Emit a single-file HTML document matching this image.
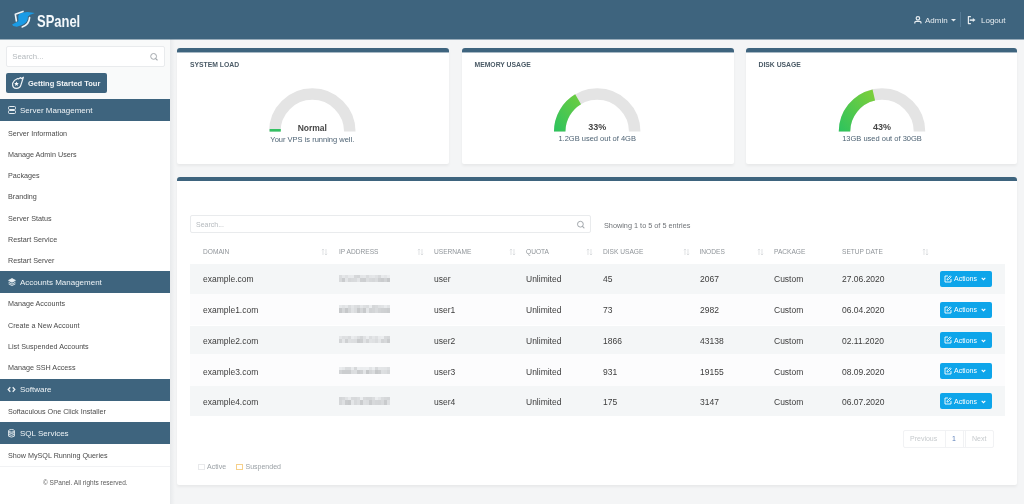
<!DOCTYPE html><html><head><meta charset="utf-8"><style>
*{margin:0;padding:0;box-sizing:border-box}
html,body{width:1024px;height:504px;overflow:hidden}
body{background:#f4f5f6;font-family:"Liberation Sans",sans-serif;position:relative;color:#3a3a3a}
.a{position:absolute;white-space:nowrap;line-height:1}
.sbox{background:#fff;border:1px solid #e9ebed;border-radius:2px}
.sec{left:0;width:170px;height:22px;background:#3e647e;color:#eef3f6;font-size:8px}
.sec span{position:absolute;left:20px;top:7.5px;line-height:1}
.itm{left:8px;font-size:7.2px;color:#4a4a4a}
.card{background:#fff;border-radius:3px 3px 2px 2px;border-top:5px solid #3e647e;box-shadow:0 1.5px 3px rgba(0,0,0,0.05)}
.ttl{font-size:6.8px;font-weight:bold;color:#4a5a66}
.th{font-size:6.6px;color:#8f9499;top:248.6px}
.srt{top:248px}
.td{font-size:8.5px;color:#3d3d3d}
.btn{left:940px;width:52px;height:16.2px;background:#0ea5ea;border-radius:2px}
.btn span{position:absolute;left:14px;top:4.5px;font-size:7px;color:#fff;line-height:1}
.ip{left:339px;font-size:8.5px;color:#a3a8ac;filter:blur(0.75px);letter-spacing:-0.2px}
</style></head><body>
<div class="a" style="left:0;top:0;width:1024px;height:504px;will-change:transform;background:#f4f5f6">
<div class="a" style="left:0;top:0;width:1024px;height:39px;background:#3e647e"></div>
<div class="a" style="left:0;top:39px;width:170px;height:465px;background:#fff"></div>
<div class="a" style="left:0;top:39px;width:170px;height:60px;background:#f9fafa"></div>
<div class="a" style="left:170px;top:39px;width:5px;height:465px;background:linear-gradient(90deg,#e8eaec,#f4f5f6)"></div>
<div class="a" style="left:0;top:39px;width:1024px;height:1px;background:#3e647e;opacity:.5"></div>
<svg class="a" style="left:0;top:0" width="40" height="32" viewBox="0 0 40 32">
<path d="M12.1 24.6 L18.4 21.2 L18.3 16 Q18.8 13.3 23.5 12.5 L27.6 12.1 L34.8 12.9 L30.2 14.8 L27.9 16.6 L27.7 19 Q26.6 23.2 21.4 25.3 L16.8 26.7 L13.2 26.1 Z" fill="#1a9be6"/>
<path d="M23 11.4 L15.3 14.2 L16.4 21" stroke="#eef4f8" stroke-width="1.6" fill="none" stroke-linecap="round" stroke-linejoin="round"/>
<path d="M29.6 17.6 Q29.3 24.5 22.2 26.9" stroke="#eef4f8" stroke-width="1.6" fill="none" stroke-linecap="round"/>
</svg>
<div class="a" style="left:37.2px;top:13px;font-size:16.4px;font-weight:bold;color:#f4f8fb;transform:scaleX(0.79);transform-origin:left top">SPanel</div>
<svg class="a" style="left:913px;top:15px" width="10" height="10" viewBox="0 0 10 10">
<circle cx="4.9" cy="3.35" r="1.75" stroke="#e6ecf0" stroke-width="1.2" fill="none"/>
<path d="M1.8 8.4 L1.8 7.6 Q1.8 6.4 3.2 6.4 L6.6 6.4 Q8 6.4 8 7.6 L8 8.4" stroke="#e6ecf0" stroke-width="1.2" fill="none"/>
</svg>
<div class="a" style="left:925px;top:17px;font-size:8px;color:#e6ecf0">Admin</div>
<svg class="a" style="left:951px;top:18.5px" width="5" height="3" viewBox="0 0 5 3"><path d="M0 0 L5 0 L2.5 2.5Z" fill="#e6ecf0"/></svg>
<div class="a" style="left:959.5px;top:12px;width:1px;height:15px;background:#557a95"></div>
<svg class="a" style="left:967px;top:16px" width="10" height="9" viewBox="0 0 10 9">
<path d="M3.9 0.6 L1.4 0.6 L1.4 7.6 L3.9 7.6" stroke="#e6ecf0" stroke-width="1.2" fill="none" stroke-linejoin="round"/>
<path d="M2.7 4.1 L6.2 4.1" stroke="#e6ecf0" stroke-width="1.5" fill="none"/>
<path d="M5.8 2.1 L8.5 4.1 L5.8 6 Z" fill="#e6ecf0"/>
</svg>
<div class="a" style="left:981px;top:17px;font-size:8px;color:#e6ecf0">Logout</div>
<div class="a sbox" style="left:5.5px;top:46px;width:159px;height:20.5px"></div>
<div class="a" style="left:12.3px;top:52.5px;font-size:7.8px;color:#b4b9bd">Search...</div>
<svg class="a" style="left:149px;top:52px" width="10" height="10" viewBox="0 0 10 10">
<circle cx="4.6" cy="4.4" r="2.9" stroke="#a3a8ad" stroke-width="1" fill="none"/><path d="M6.7 6.6 L8.2 8" stroke="#a3a8ad" stroke-width="1.1" stroke-linecap="round"/></svg>
<div class="a" style="left:5.5px;top:73px;width:101.8px;height:19.5px;background:#3e647e;border-radius:2px"></div>
<svg class="a" style="left:11px;top:76px" width="14" height="14" viewBox="0 0 14 14">
<path d="M1.6 7.2 Q1.2 12.4 5.4 12.4 Q9 12.3 9.9 9 L12.4 1.2 L10.3 2.7 L9.7 1.6 L7.3 3 L6.6 2.5 Q3 3.8 1.6 7.2 Z" stroke="#eef3f6" stroke-width="1.15" fill="none" stroke-linejoin="round"/>
<path d="M5.50 5.50 L6.15 7.11 L7.88 7.23 L6.55 8.34 L6.97 10.02 L5.50 9.10 L4.03 10.02 L4.45 8.34 L3.12 7.23 L4.85 7.11 Z" fill="#fff"/>
</svg>
<div class="a" style="left:28px;top:80px;font-size:7.5px;font-weight:bold;color:#f2f5f7">Getting Started Tour</div>
<div class="a sec" style="top:99px"><svg class="a" style="left:8px;top:7px" width="8" height="8" viewBox="0 0 8 8"><rect x="0.5" y="0.5" width="7" height="3" rx="1" stroke="#e8eef2" fill="none" stroke-width="1"/><rect x="0.5" y="4.5" width="7" height="3" rx="1" stroke="#e8eef2" fill="none" stroke-width="1"/></svg><span>Server Management</span></div>
<div class="a itm" style="top:130px">Server Information</div>
<div class="a itm" style="top:151px">Manage Admin Users</div>
<div class="a itm" style="top:172px">Packages</div>
<div class="a itm" style="top:193px">Branding</div>
<div class="a itm" style="top:215px">Server Status</div>
<div class="a itm" style="top:236px">Restart Service</div>
<div class="a itm" style="top:257px">Restart Server</div>
<div class="a sec" style="top:271px"><svg class="a" style="left:8px;top:7px" width="8" height="8" viewBox="0 0 8 8"><path d="M4 0.6 L7.4 2.4 L4 4.2 L0.6 2.4 Z" stroke="#e8eef2" fill="#e8eef2" stroke-width="0.9"/><path d="M0.6 4.3 L4 6.1 L7.4 4.3 M0.6 5.9 L4 7.5 L7.4 5.9" stroke="#e8eef2" fill="none" stroke-width="0.9"/></svg><span>Accounts Management</span></div>
<div class="a itm" style="top:300.4px">Manage Accounts</div>
<div class="a itm" style="top:321.7px">Create a New Account</div>
<div class="a itm" style="top:343.0px">List Suspended Accounts</div>
<div class="a itm" style="top:364.3px">Manage SSH Access</div>
<div class="a sec" style="top:378.6px"><svg class="a" style="left:7px;top:7.5px" width="9" height="7" viewBox="0 0 9 7"><path d="M3.3 1.2 L1.2 3.5 L3.3 5.8 M5.7 1.2 L7.8 3.5 L5.7 5.8" stroke="#e8eef2" fill="none" stroke-width="1.3"/></svg><span>Software</span></div>
<div class="a itm" style="top:408.2px">Softaculous One Click Installer</div>
<div class="a sec" style="top:422px"><svg class="a" style="left:8px;top:6.5px" width="7" height="9" viewBox="0 0 7 9"><ellipse cx="3.5" cy="1.8" rx="2.9" ry="1.3" stroke="#e8eef2" fill="none" stroke-width="0.9"/><path d="M0.6 1.8 L0.6 7.2 Q3.5 9 6.4 7.2 L6.4 1.8 M0.6 3.6 Q3.5 5.4 6.4 3.6 M0.6 5.4 Q3.5 7.2 6.4 5.4" stroke="#e8eef2" fill="none" stroke-width="0.9"/></svg><span>SQL Services</span></div>
<div class="a itm" style="top:452.2px">Show MySQL Running Queries</div>
<div class="a" style="left:0;top:466px;width:170px;height:1px;background:#f1f2f4"></div>
<div class="a" style="left:43px;top:480px;font-size:6.5px;color:#5a5a5a">© SPanel. All rights reserved.</div>
<div class="a card" style="left:177px;top:48px;width:272px;height:116px;border-top-width:4px"></div>
<div class="a" style="left:177px;top:52px;width:272px;height:1px;background:rgba(62,100,126,0.45)"></div>
<div class="a ttl" style="left:190px;top:61.8px">SYSTEM LOAD</div>
<div class="a card" style="left:461.5px;top:48px;width:272px;height:116px;border-top-width:4px"></div>
<div class="a" style="left:461.5px;top:52px;width:272px;height:1px;background:rgba(62,100,126,0.45)"></div>
<div class="a ttl" style="left:474.5px;top:61.8px">MEMORY USAGE</div>
<div class="a card" style="left:745.5px;top:48px;width:271.5px;height:116px;border-top-width:4px"></div>
<div class="a" style="left:745.5px;top:52px;width:271.5px;height:1px;background:rgba(62,100,126,0.45)"></div>
<div class="a ttl" style="left:758.5px;top:61.8px">DISK USAGE</div>
<svg class="a" style="left:0;top:0" width="1024" height="504" viewBox="0 0 1024 504"><defs><linearGradient id="g312" gradientUnits="userSpaceOnUse" x1="269.3" y1="131.6" x2="320.3" y2="88.6"><stop offset="0" stop-color="#2cc35e"/><stop offset="1" stop-color="#93d230"/></linearGradient></defs><path d="M 274.80 131.60 A 37.50 37.50 0 0 1 349.80 131.60" stroke="#e4e4e4" stroke-width="11.5" fill="none"/></svg>
<div class="a" style="left:212.3px;top:124px;width:200px;text-align:center;font-size:8.5px;font-weight:bold;color:#474747">Normal</div>
<div class="a" style="left:212.3px;top:136px;width:200px;text-align:center;font-size:7.5px;color:#4e6374">Your VPS is running well.</div>
<svg class="a" style="left:0;top:0" width="1024" height="504"><path d="M 269.6 130.3 L 280.8 130.3" stroke="#34c063" stroke-width="2.6"/></svg>
<svg class="a" style="left:0;top:0" width="1024" height="504" viewBox="0 0 1024 504"><defs><linearGradient id="g597" gradientUnits="userSpaceOnUse" x1="554.2" y1="131.6" x2="605.2" y2="88.6"><stop offset="0" stop-color="#2cc35e"/><stop offset="1" stop-color="#93d230"/></linearGradient></defs><path d="M 559.70 131.60 A 37.50 37.50 0 0 1 634.70 131.60" stroke="#e4e4e4" stroke-width="11.5" fill="none"/><path d="M 559.70 131.60 A 37.50 37.50 0 0 1 578.11 99.32" stroke="url(#g597)" stroke-width="11.5" fill="none"/></svg>
<div class="a" style="left:497.20000000000005px;top:122.8px;width:200px;text-align:center;font-size:9px;font-weight:bold;color:#474747">33%</div>
<div class="a" style="left:497.20000000000005px;top:135px;width:200px;text-align:center;font-size:7.5px;color:#4e6374">1.2GB used out of 4GB</div>
<svg class="a" style="left:0;top:0" width="1024" height="504" viewBox="0 0 1024 504"><defs><linearGradient id="g882" gradientUnits="userSpaceOnUse" x1="839.0" y1="131.6" x2="890.0" y2="88.6"><stop offset="0" stop-color="#2cc35e"/><stop offset="1" stop-color="#93d230"/></linearGradient></defs><path d="M 844.50 131.60 A 37.50 37.50 0 0 1 919.50 131.60" stroke="#e4e4e4" stroke-width="11.5" fill="none"/><path d="M 844.50 131.60 A 37.50 37.50 0 0 1 873.82 95.00" stroke="url(#g882)" stroke-width="11.5" fill="none"/></svg>
<div class="a" style="left:782px;top:122.8px;width:200px;text-align:center;font-size:9px;font-weight:bold;color:#474747">43%</div>
<div class="a" style="left:782px;top:135px;width:200px;text-align:center;font-size:7.5px;color:#4e6374">13GB used out of 30GB</div>
<div class="a card" style="left:177px;top:177px;width:840px;height:307.5px;border-top-width:4px"></div>
<div class="a sbox" style="left:190px;top:214.5px;width:401px;height:18.5px"></div>
<div class="a" style="left:196px;top:220.5px;font-size:7px;color:#b4b9bd">Search...</div>
<svg class="a" style="left:575.5px;top:220px" width="9" height="9" viewBox="0 0 9 9">
<circle cx="4.4" cy="4.2" r="2.9" stroke="#a3a8ad" stroke-width="1" fill="none"/><path d="M6.5 6.4 L8 7.8" stroke="#a3a8ad" stroke-width="1.1" stroke-linecap="round"/></svg>
<div class="a" style="left:604px;top:222px;font-size:7.3px;color:#6f7377">Showing 1 to 5 of 5 entries</div>
<div class="a th" style="left:203px">DOMAIN</div>
<svg class="a srt" style="left:321.4px" width="7" height="8" viewBox="0 0 7 8"><path d="M2 7 L2 1 M0.8 2.2 L2 1 L3.2 2.2 M5 1 L5 7 M3.8 5.8 L5 7 L6.2 5.8" stroke="#d3d6d9" stroke-width="0.7" fill="none"/></svg>
<div class="a th" style="left:339px">IP ADDRESS</div>
<svg class="a srt" style="left:416.8px" width="7" height="8" viewBox="0 0 7 8"><path d="M2 7 L2 1 M0.8 2.2 L2 1 L3.2 2.2 M5 1 L5 7 M3.8 5.8 L5 7 L6.2 5.8" stroke="#d3d6d9" stroke-width="0.7" fill="none"/></svg>
<div class="a th" style="left:434px">USERNAME</div>
<svg class="a srt" style="left:509.0px" width="7" height="8" viewBox="0 0 7 8"><path d="M2 7 L2 1 M0.8 2.2 L2 1 L3.2 2.2 M5 1 L5 7 M3.8 5.8 L5 7 L6.2 5.8" stroke="#d3d6d9" stroke-width="0.7" fill="none"/></svg>
<div class="a th" style="left:526px">QUOTA</div>
<svg class="a srt" style="left:586.0px" width="7" height="8" viewBox="0 0 7 8"><path d="M2 7 L2 1 M0.8 2.2 L2 1 L3.2 2.2 M5 1 L5 7 M3.8 5.8 L5 7 L6.2 5.8" stroke="#d3d6d9" stroke-width="0.7" fill="none"/></svg>
<div class="a th" style="left:603px">DISK USAGE</div>
<svg class="a srt" style="left:682.6px" width="7" height="8" viewBox="0 0 7 8"><path d="M2 7 L2 1 M0.8 2.2 L2 1 L3.2 2.2 M5 1 L5 7 M3.8 5.8 L5 7 L6.2 5.8" stroke="#d3d6d9" stroke-width="0.7" fill="none"/></svg>
<div class="a th" style="left:699.5px">INODES</div>
<svg class="a srt" style="left:757.0px" width="7" height="8" viewBox="0 0 7 8"><path d="M2 7 L2 1 M0.8 2.2 L2 1 L3.2 2.2 M5 1 L5 7 M3.8 5.8 L5 7 L6.2 5.8" stroke="#d3d6d9" stroke-width="0.7" fill="none"/></svg>
<div class="a th" style="left:774px">PACKAGE</div>
<div class="a th" style="left:842px">SETUP DATE</div>
<svg class="a srt" style="left:922.3px" width="7" height="8" viewBox="0 0 7 8"><path d="M2 7 L2 1 M0.8 2.2 L2 1 L3.2 2.2 M5 1 L5 7 M3.8 5.8 L5 7 L6.2 5.8" stroke="#d3d6d9" stroke-width="0.7" fill="none"/></svg>
<div class="a" style="left:190px;top:264.00px;width:815px;height:30.30px;background:#f4f6f7"></div>
<div class="a td" style="left:203px;top:275.00px">example.com</div>
<div class="a td" style="left:434px;top:275.00px">user</div>
<div class="a td" style="left:526px;top:275.00px">Unlimited</div>
<div class="a td" style="left:603px;top:275.00px">45</div>
<div class="a td" style="left:700px;top:275.00px">2067</div>
<div class="a td" style="left:774px;top:275.00px">Custom</div>
<div class="a td" style="left:842px;top:275.00px">27.06.2020</div>
<div class="a" style="left:339px;top:274.70px;width:49px;height:7.5px;filter:blur(0.6px)"><div class="a" style="left:0px;top:0px;width:3px;height:3px;background:rgb(219,221,223)"></div><div class="a" style="left:0px;top:3px;width:3px;height:4.5px;background:rgb(216,218,220)"></div><div class="a" style="left:3px;top:0px;width:3px;height:3px;background:rgb(229,231,233)"></div><div class="a" style="left:3px;top:3px;width:3px;height:4.5px;background:rgb(202,204,206)"></div><div class="a" style="left:6px;top:0px;width:3px;height:3px;background:rgb(223,225,227)"></div><div class="a" style="left:6px;top:3px;width:3px;height:4.5px;background:rgb(227,229,231)"></div><div class="a" style="left:9px;top:0px;width:3px;height:3px;background:rgb(231,233,235)"></div><div class="a" style="left:9px;top:3px;width:3px;height:4.5px;background:rgb(213,215,217)"></div><div class="a" style="left:12px;top:0px;width:3px;height:3px;background:rgb(232,234,236)"></div><div class="a" style="left:12px;top:3px;width:3px;height:4.5px;background:rgb(216,218,220)"></div><div class="a" style="left:15px;top:0px;width:3px;height:3px;background:rgb(214,216,218)"></div><div class="a" style="left:15px;top:3px;width:3px;height:4.5px;background:rgb(217,219,221)"></div><div class="a" style="left:18px;top:0px;width:3px;height:3px;background:rgb(212,214,216)"></div><div class="a" style="left:18px;top:3px;width:3px;height:4.5px;background:rgb(227,229,231)"></div><div class="a" style="left:21px;top:0px;width:3px;height:3px;background:rgb(227,229,231)"></div><div class="a" style="left:21px;top:3px;width:3px;height:4.5px;background:rgb(206,208,210)"></div><div class="a" style="left:24px;top:0px;width:3px;height:3px;background:rgb(229,231,233)"></div><div class="a" style="left:24px;top:3px;width:3px;height:4.5px;background:rgb(205,207,209)"></div><div class="a" style="left:27px;top:0px;width:3px;height:3px;background:rgb(218,220,222)"></div><div class="a" style="left:27px;top:3px;width:3px;height:4.5px;background:rgb(220,222,224)"></div><div class="a" style="left:30px;top:0px;width:3px;height:3px;background:rgb(227,229,231)"></div><div class="a" style="left:30px;top:3px;width:3px;height:4.5px;background:rgb(215,217,219)"></div><div class="a" style="left:33px;top:0px;width:3px;height:3px;background:rgb(229,231,233)"></div><div class="a" style="left:33px;top:3px;width:3px;height:4.5px;background:rgb(213,215,217)"></div><div class="a" style="left:36px;top:0px;width:3px;height:3px;background:rgb(224,226,228)"></div><div class="a" style="left:36px;top:3px;width:3px;height:4.5px;background:rgb(218,220,222)"></div><div class="a" style="left:39px;top:0px;width:3px;height:3px;background:rgb(216,218,220)"></div><div class="a" style="left:39px;top:3px;width:3px;height:4.5px;background:rgb(205,207,209)"></div><div class="a" style="left:42px;top:0px;width:3px;height:3px;background:rgb(232,234,236)"></div><div class="a" style="left:42px;top:3px;width:3px;height:4.5px;background:rgb(202,204,206)"></div><div class="a" style="left:45px;top:0px;width:3px;height:3px;background:rgb(228,230,232)"></div><div class="a" style="left:45px;top:3px;width:3px;height:4.5px;background:rgb(210,212,214)"></div><div class="a" style="left:48px;top:0px;width:3px;height:3px;background:rgb(235,237,239)"></div><div class="a" style="left:48px;top:3px;width:3px;height:4.5px;background:rgb(198,200,202)"></div></div>
<div class="a btn" style="top:270.90px"><svg class="a" style="left:4px;top:4px" width="8" height="8" viewBox="0 0 8 8"><path d="M4 1 L1 1 L1 7 L7 7 L7 4" stroke="#fff" stroke-width="0.9" fill="none"/><path d="M3 5 L3.2 3.8 L6.2 0.8 L7.2 1.8 L4.2 4.8 Z" stroke="#fff" stroke-width="0.8" fill="none"/></svg><span>Actions</span><svg class="a" style="left:41px;top:6.5px" width="5" height="4" viewBox="0 0 5 4"><path d="M0.7 0.8 L2.5 2.6 L4.3 0.8" stroke="#fff" stroke-width="1.1" fill="none"/></svg></div>
<div class="a" style="left:190px;top:294.30px;width:815px;height:31.20px;background:#fcfcfd"></div>
<div class="a td" style="left:203px;top:306.00px">example1.com</div>
<div class="a td" style="left:434px;top:306.00px">user1</div>
<div class="a td" style="left:526px;top:306.00px">Unlimited</div>
<div class="a td" style="left:603px;top:306.00px">73</div>
<div class="a td" style="left:700px;top:306.00px">2982</div>
<div class="a td" style="left:774px;top:306.00px">Custom</div>
<div class="a td" style="left:842px;top:306.00px">06.04.2020</div>
<div class="a" style="left:339px;top:305.30px;width:49px;height:7.5px;filter:blur(0.6px)"><div class="a" style="left:0px;top:0px;width:3px;height:3px;background:rgb(230,232,234)"></div><div class="a" style="left:0px;top:3px;width:3px;height:4.5px;background:rgb(199,201,203)"></div><div class="a" style="left:3px;top:0px;width:3px;height:3px;background:rgb(225,227,229)"></div><div class="a" style="left:3px;top:3px;width:3px;height:4.5px;background:rgb(213,215,217)"></div><div class="a" style="left:6px;top:0px;width:3px;height:3px;background:rgb(230,232,234)"></div><div class="a" style="left:6px;top:3px;width:3px;height:4.5px;background:rgb(198,200,202)"></div><div class="a" style="left:9px;top:0px;width:3px;height:3px;background:rgb(218,220,222)"></div><div class="a" style="left:9px;top:3px;width:3px;height:4.5px;background:rgb(212,214,216)"></div><div class="a" style="left:12px;top:0px;width:3px;height:3px;background:rgb(227,229,231)"></div><div class="a" style="left:12px;top:3px;width:3px;height:4.5px;background:rgb(224,226,228)"></div><div class="a" style="left:15px;top:0px;width:3px;height:3px;background:rgb(220,222,224)"></div><div class="a" style="left:15px;top:3px;width:3px;height:4.5px;background:rgb(218,220,222)"></div><div class="a" style="left:18px;top:0px;width:3px;height:3px;background:rgb(217,219,221)"></div><div class="a" style="left:18px;top:3px;width:3px;height:4.5px;background:rgb(199,201,203)"></div><div class="a" style="left:21px;top:0px;width:3px;height:3px;background:rgb(228,230,232)"></div><div class="a" style="left:21px;top:3px;width:3px;height:4.5px;background:rgb(213,215,217)"></div><div class="a" style="left:24px;top:0px;width:3px;height:3px;background:rgb(222,224,226)"></div><div class="a" style="left:24px;top:3px;width:3px;height:4.5px;background:rgb(200,202,204)"></div><div class="a" style="left:27px;top:0px;width:3px;height:3px;background:rgb(219,221,223)"></div><div class="a" style="left:27px;top:3px;width:3px;height:4.5px;background:rgb(228,230,232)"></div><div class="a" style="left:30px;top:0px;width:3px;height:3px;background:rgb(235,237,239)"></div><div class="a" style="left:30px;top:3px;width:3px;height:4.5px;background:rgb(209,211,213)"></div><div class="a" style="left:33px;top:0px;width:3px;height:3px;background:rgb(213,215,217)"></div><div class="a" style="left:33px;top:3px;width:3px;height:4.5px;background:rgb(211,213,215)"></div><div class="a" style="left:36px;top:0px;width:3px;height:3px;background:rgb(216,218,220)"></div><div class="a" style="left:36px;top:3px;width:3px;height:4.5px;background:rgb(217,219,221)"></div><div class="a" style="left:39px;top:0px;width:3px;height:3px;background:rgb(223,225,227)"></div><div class="a" style="left:39px;top:3px;width:3px;height:4.5px;background:rgb(210,212,214)"></div><div class="a" style="left:42px;top:0px;width:3px;height:3px;background:rgb(225,227,229)"></div><div class="a" style="left:42px;top:3px;width:3px;height:4.5px;background:rgb(207,209,211)"></div><div class="a" style="left:45px;top:0px;width:3px;height:3px;background:rgb(233,235,237)"></div><div class="a" style="left:45px;top:3px;width:3px;height:4.5px;background:rgb(206,208,210)"></div><div class="a" style="left:48px;top:0px;width:3px;height:3px;background:rgb(226,228,230)"></div><div class="a" style="left:48px;top:3px;width:3px;height:4.5px;background:rgb(203,205,207)"></div></div>
<div class="a btn" style="top:301.50px"><svg class="a" style="left:4px;top:4px" width="8" height="8" viewBox="0 0 8 8"><path d="M4 1 L1 1 L1 7 L7 7 L7 4" stroke="#fff" stroke-width="0.9" fill="none"/><path d="M3 5 L3.2 3.8 L6.2 0.8 L7.2 1.8 L4.2 4.8 Z" stroke="#fff" stroke-width="0.8" fill="none"/></svg><span>Actions</span><svg class="a" style="left:41px;top:6.5px" width="5" height="4" viewBox="0 0 5 4"><path d="M0.7 0.8 L2.5 2.6 L4.3 0.8" stroke="#fff" stroke-width="1.1" fill="none"/></svg></div>
<div class="a" style="left:190px;top:325.50px;width:815px;height:28.50px;background:#f4f6f7"></div>
<div class="a td" style="left:203px;top:337.00px">example2.com</div>
<div class="a td" style="left:434px;top:337.00px">user2</div>
<div class="a td" style="left:526px;top:337.00px">Unlimited</div>
<div class="a td" style="left:603px;top:337.00px">1866</div>
<div class="a td" style="left:700px;top:337.00px">43138</div>
<div class="a td" style="left:774px;top:337.00px">Custom</div>
<div class="a td" style="left:842px;top:337.00px">02.11.2020</div>
<div class="a" style="left:339px;top:335.90px;width:49px;height:7.5px;filter:blur(0.6px)"><div class="a" style="left:0px;top:0px;width:3px;height:3px;background:rgb(228,230,232)"></div><div class="a" style="left:0px;top:3px;width:3px;height:4.5px;background:rgb(211,213,215)"></div><div class="a" style="left:3px;top:0px;width:3px;height:3px;background:rgb(221,223,225)"></div><div class="a" style="left:3px;top:3px;width:3px;height:4.5px;background:rgb(228,230,232)"></div><div class="a" style="left:6px;top:0px;width:3px;height:3px;background:rgb(223,225,227)"></div><div class="a" style="left:6px;top:3px;width:3px;height:4.5px;background:rgb(207,209,211)"></div><div class="a" style="left:9px;top:0px;width:3px;height:3px;background:rgb(217,219,221)"></div><div class="a" style="left:9px;top:3px;width:3px;height:4.5px;background:rgb(222,224,226)"></div><div class="a" style="left:12px;top:0px;width:3px;height:3px;background:rgb(234,236,238)"></div><div class="a" style="left:12px;top:3px;width:3px;height:4.5px;background:rgb(220,222,224)"></div><div class="a" style="left:15px;top:0px;width:3px;height:3px;background:rgb(229,231,233)"></div><div class="a" style="left:15px;top:3px;width:3px;height:4.5px;background:rgb(219,221,223)"></div><div class="a" style="left:18px;top:0px;width:3px;height:3px;background:rgb(220,222,224)"></div><div class="a" style="left:18px;top:3px;width:3px;height:4.5px;background:rgb(201,203,205)"></div><div class="a" style="left:21px;top:0px;width:3px;height:3px;background:rgb(212,214,216)"></div><div class="a" style="left:21px;top:3px;width:3px;height:4.5px;background:rgb(205,207,209)"></div><div class="a" style="left:24px;top:0px;width:3px;height:3px;background:rgb(224,226,228)"></div><div class="a" style="left:24px;top:3px;width:3px;height:4.5px;background:rgb(224,226,228)"></div><div class="a" style="left:27px;top:0px;width:3px;height:3px;background:rgb(235,237,239)"></div><div class="a" style="left:27px;top:3px;width:3px;height:4.5px;background:rgb(211,213,215)"></div><div class="a" style="left:30px;top:0px;width:3px;height:3px;background:rgb(220,222,224)"></div><div class="a" style="left:30px;top:3px;width:3px;height:4.5px;background:rgb(225,227,229)"></div><div class="a" style="left:33px;top:0px;width:3px;height:3px;background:rgb(228,230,232)"></div><div class="a" style="left:33px;top:3px;width:3px;height:4.5px;background:rgb(223,225,227)"></div><div class="a" style="left:36px;top:0px;width:3px;height:3px;background:rgb(222,224,226)"></div><div class="a" style="left:36px;top:3px;width:3px;height:4.5px;background:rgb(218,220,222)"></div><div class="a" style="left:39px;top:0px;width:3px;height:3px;background:rgb(233,235,237)"></div><div class="a" style="left:39px;top:3px;width:3px;height:4.5px;background:rgb(228,230,232)"></div><div class="a" style="left:42px;top:0px;width:3px;height:3px;background:rgb(235,237,239)"></div><div class="a" style="left:42px;top:3px;width:3px;height:4.5px;background:rgb(210,212,214)"></div><div class="a" style="left:45px;top:0px;width:3px;height:3px;background:rgb(216,218,220)"></div><div class="a" style="left:45px;top:3px;width:3px;height:4.5px;background:rgb(215,217,219)"></div><div class="a" style="left:48px;top:0px;width:3px;height:3px;background:rgb(213,215,217)"></div><div class="a" style="left:48px;top:3px;width:3px;height:4.5px;background:rgb(202,204,206)"></div></div>
<div class="a btn" style="top:332.10px"><svg class="a" style="left:4px;top:4px" width="8" height="8" viewBox="0 0 8 8"><path d="M4 1 L1 1 L1 7 L7 7 L7 4" stroke="#fff" stroke-width="0.9" fill="none"/><path d="M3 5 L3.2 3.8 L6.2 0.8 L7.2 1.8 L4.2 4.8 Z" stroke="#fff" stroke-width="0.8" fill="none"/></svg><span>Actions</span><svg class="a" style="left:41px;top:6.5px" width="5" height="4" viewBox="0 0 5 4"><path d="M0.7 0.8 L2.5 2.6 L4.3 0.8" stroke="#fff" stroke-width="1.1" fill="none"/></svg></div>
<div class="a" style="left:190px;top:354.00px;width:815px;height:32.30px;background:#fcfcfd"></div>
<div class="a td" style="left:203px;top:368.00px">example3.com</div>
<div class="a td" style="left:434px;top:368.00px">user3</div>
<div class="a td" style="left:526px;top:368.00px">Unlimited</div>
<div class="a td" style="left:603px;top:368.00px">931</div>
<div class="a td" style="left:700px;top:368.00px">19155</div>
<div class="a td" style="left:774px;top:368.00px">Custom</div>
<div class="a td" style="left:842px;top:368.00px">08.09.2020</div>
<div class="a" style="left:339px;top:366.50px;width:49px;height:7.5px;filter:blur(0.6px)"><div class="a" style="left:0px;top:0px;width:3px;height:3px;background:rgb(234,236,238)"></div><div class="a" style="left:0px;top:3px;width:3px;height:4.5px;background:rgb(210,212,214)"></div><div class="a" style="left:3px;top:0px;width:3px;height:3px;background:rgb(230,232,234)"></div><div class="a" style="left:3px;top:3px;width:3px;height:4.5px;background:rgb(203,205,207)"></div><div class="a" style="left:6px;top:0px;width:3px;height:3px;background:rgb(218,220,222)"></div><div class="a" style="left:6px;top:3px;width:3px;height:4.5px;background:rgb(203,205,207)"></div><div class="a" style="left:9px;top:0px;width:3px;height:3px;background:rgb(218,220,222)"></div><div class="a" style="left:9px;top:3px;width:3px;height:4.5px;background:rgb(203,205,207)"></div><div class="a" style="left:12px;top:0px;width:3px;height:3px;background:rgb(233,235,237)"></div><div class="a" style="left:12px;top:3px;width:3px;height:4.5px;background:rgb(219,221,223)"></div><div class="a" style="left:15px;top:0px;width:3px;height:3px;background:rgb(214,216,218)"></div><div class="a" style="left:15px;top:3px;width:3px;height:4.5px;background:rgb(220,222,224)"></div><div class="a" style="left:18px;top:0px;width:3px;height:3px;background:rgb(236,238,240)"></div><div class="a" style="left:18px;top:3px;width:3px;height:4.5px;background:rgb(202,204,206)"></div><div class="a" style="left:21px;top:0px;width:3px;height:3px;background:rgb(234,236,238)"></div><div class="a" style="left:21px;top:3px;width:3px;height:4.5px;background:rgb(207,209,211)"></div><div class="a" style="left:24px;top:0px;width:3px;height:3px;background:rgb(235,237,239)"></div><div class="a" style="left:24px;top:3px;width:3px;height:4.5px;background:rgb(227,229,231)"></div><div class="a" style="left:27px;top:0px;width:3px;height:3px;background:rgb(236,238,240)"></div><div class="a" style="left:27px;top:3px;width:3px;height:4.5px;background:rgb(198,200,202)"></div><div class="a" style="left:30px;top:0px;width:3px;height:3px;background:rgb(226,228,230)"></div><div class="a" style="left:30px;top:3px;width:3px;height:4.5px;background:rgb(212,214,216)"></div><div class="a" style="left:33px;top:0px;width:3px;height:3px;background:rgb(235,237,239)"></div><div class="a" style="left:33px;top:3px;width:3px;height:4.5px;background:rgb(218,220,222)"></div><div class="a" style="left:36px;top:0px;width:3px;height:3px;background:rgb(215,217,219)"></div><div class="a" style="left:36px;top:3px;width:3px;height:4.5px;background:rgb(198,200,202)"></div><div class="a" style="left:39px;top:0px;width:3px;height:3px;background:rgb(228,230,232)"></div><div class="a" style="left:39px;top:3px;width:3px;height:4.5px;background:rgb(203,205,207)"></div><div class="a" style="left:42px;top:0px;width:3px;height:3px;background:rgb(227,229,231)"></div><div class="a" style="left:42px;top:3px;width:3px;height:4.5px;background:rgb(221,223,225)"></div><div class="a" style="left:45px;top:0px;width:3px;height:3px;background:rgb(226,228,230)"></div><div class="a" style="left:45px;top:3px;width:3px;height:4.5px;background:rgb(219,221,223)"></div><div class="a" style="left:48px;top:0px;width:3px;height:3px;background:rgb(221,223,225)"></div><div class="a" style="left:48px;top:3px;width:3px;height:4.5px;background:rgb(213,215,217)"></div></div>
<div class="a btn" style="top:362.70px"><svg class="a" style="left:4px;top:4px" width="8" height="8" viewBox="0 0 8 8"><path d="M4 1 L1 1 L1 7 L7 7 L7 4" stroke="#fff" stroke-width="0.9" fill="none"/><path d="M3 5 L3.2 3.8 L6.2 0.8 L7.2 1.8 L4.2 4.8 Z" stroke="#fff" stroke-width="0.8" fill="none"/></svg><span>Actions</span><svg class="a" style="left:41px;top:6.5px" width="5" height="4" viewBox="0 0 5 4"><path d="M0.7 0.8 L2.5 2.6 L4.3 0.8" stroke="#fff" stroke-width="1.1" fill="none"/></svg></div>
<div class="a" style="left:190px;top:386.30px;width:815px;height:29.70px;background:#f4f6f7"></div>
<div class="a td" style="left:203px;top:398.00px">example4.com</div>
<div class="a td" style="left:434px;top:398.00px">user4</div>
<div class="a td" style="left:526px;top:398.00px">Unlimited</div>
<div class="a td" style="left:603px;top:398.00px">175</div>
<div class="a td" style="left:700px;top:398.00px">3147</div>
<div class="a td" style="left:774px;top:398.00px">Custom</div>
<div class="a td" style="left:842px;top:398.00px">06.07.2020</div>
<div class="a" style="left:339px;top:397.10px;width:49px;height:7.5px;filter:blur(0.6px)"><div class="a" style="left:0px;top:0px;width:3px;height:3px;background:rgb(212,214,216)"></div><div class="a" style="left:0px;top:3px;width:3px;height:4.5px;background:rgb(213,215,217)"></div><div class="a" style="left:3px;top:0px;width:3px;height:3px;background:rgb(215,217,219)"></div><div class="a" style="left:3px;top:3px;width:3px;height:4.5px;background:rgb(222,224,226)"></div><div class="a" style="left:6px;top:0px;width:3px;height:3px;background:rgb(224,226,228)"></div><div class="a" style="left:6px;top:3px;width:3px;height:4.5px;background:rgb(202,204,206)"></div><div class="a" style="left:9px;top:0px;width:3px;height:3px;background:rgb(233,235,237)"></div><div class="a" style="left:9px;top:3px;width:3px;height:4.5px;background:rgb(199,201,203)"></div><div class="a" style="left:12px;top:0px;width:3px;height:3px;background:rgb(216,218,220)"></div><div class="a" style="left:12px;top:3px;width:3px;height:4.5px;background:rgb(228,230,232)"></div><div class="a" style="left:15px;top:0px;width:3px;height:3px;background:rgb(215,217,219)"></div><div class="a" style="left:15px;top:3px;width:3px;height:4.5px;background:rgb(215,217,219)"></div><div class="a" style="left:18px;top:0px;width:3px;height:3px;background:rgb(219,221,223)"></div><div class="a" style="left:18px;top:3px;width:3px;height:4.5px;background:rgb(220,222,224)"></div><div class="a" style="left:21px;top:0px;width:3px;height:3px;background:rgb(236,238,240)"></div><div class="a" style="left:21px;top:3px;width:3px;height:4.5px;background:rgb(202,204,206)"></div><div class="a" style="left:24px;top:0px;width:3px;height:3px;background:rgb(216,218,220)"></div><div class="a" style="left:24px;top:3px;width:3px;height:4.5px;background:rgb(221,223,225)"></div><div class="a" style="left:27px;top:0px;width:3px;height:3px;background:rgb(213,215,217)"></div><div class="a" style="left:27px;top:3px;width:3px;height:4.5px;background:rgb(219,221,223)"></div><div class="a" style="left:30px;top:0px;width:3px;height:3px;background:rgb(213,215,217)"></div><div class="a" style="left:30px;top:3px;width:3px;height:4.5px;background:rgb(202,204,206)"></div><div class="a" style="left:33px;top:0px;width:3px;height:3px;background:rgb(219,221,223)"></div><div class="a" style="left:33px;top:3px;width:3px;height:4.5px;background:rgb(215,217,219)"></div><div class="a" style="left:36px;top:0px;width:3px;height:3px;background:rgb(235,237,239)"></div><div class="a" style="left:36px;top:3px;width:3px;height:4.5px;background:rgb(212,214,216)"></div><div class="a" style="left:39px;top:0px;width:3px;height:3px;background:rgb(228,230,232)"></div><div class="a" style="left:39px;top:3px;width:3px;height:4.5px;background:rgb(211,213,215)"></div><div class="a" style="left:42px;top:0px;width:3px;height:3px;background:rgb(218,220,222)"></div><div class="a" style="left:42px;top:3px;width:3px;height:4.5px;background:rgb(216,218,220)"></div><div class="a" style="left:45px;top:0px;width:3px;height:3px;background:rgb(214,216,218)"></div><div class="a" style="left:45px;top:3px;width:3px;height:4.5px;background:rgb(201,203,205)"></div><div class="a" style="left:48px;top:0px;width:3px;height:3px;background:rgb(212,214,216)"></div><div class="a" style="left:48px;top:3px;width:3px;height:4.5px;background:rgb(222,224,226)"></div></div>
<div class="a btn" style="top:393.30px"><svg class="a" style="left:4px;top:4px" width="8" height="8" viewBox="0 0 8 8"><path d="M4 1 L1 1 L1 7 L7 7 L7 4" stroke="#fff" stroke-width="0.9" fill="none"/><path d="M3 5 L3.2 3.8 L6.2 0.8 L7.2 1.8 L4.2 4.8 Z" stroke="#fff" stroke-width="0.8" fill="none"/></svg><span>Actions</span><svg class="a" style="left:41px;top:6.5px" width="5" height="4" viewBox="0 0 5 4"><path d="M0.7 0.8 L2.5 2.6 L4.3 0.8" stroke="#fff" stroke-width="1.1" fill="none"/></svg></div>
<div class="a" style="left:903px;top:430px;width:90.5px;height:17.5px;border:1px solid #f1f2f4;border-radius:2px"></div>
<div class="a" style="left:944.5px;top:430px;width:1px;height:17.5px;background:#f1f2f4"></div>
<div class="a" style="left:963px;top:430px;width:1px;height:17.5px;background:#f1f2f4"></div>
<div class="a" style="left:965px;top:430px;width:1px;height:17.5px;background:#f1f2f4"></div>
<div class="a" style="left:910px;top:434.5px;font-size:7px;color:#c6cacd">Previous</div>
<div class="a" style="left:952px;top:434.5px;font-size:7px;color:#5a7eb8">1</div>
<div class="a" style="left:972px;top:434.5px;font-size:7px;color:#c6cacd">Next</div>
<div class="a" style="left:198px;top:463.5px;width:6.5px;height:6px;border:1px solid #e8e9eb"></div>
<div class="a" style="left:207px;top:463.2px;font-size:7px;color:#9aa0a5">Active</div>
<div class="a" style="left:236px;top:463.5px;width:6.5px;height:6px;border:1px solid #f6d08a"></div>
<div class="a" style="left:245.5px;top:463.2px;font-size:7px;color:#9aa0a5">Suspended</div>
</div></body></html>
